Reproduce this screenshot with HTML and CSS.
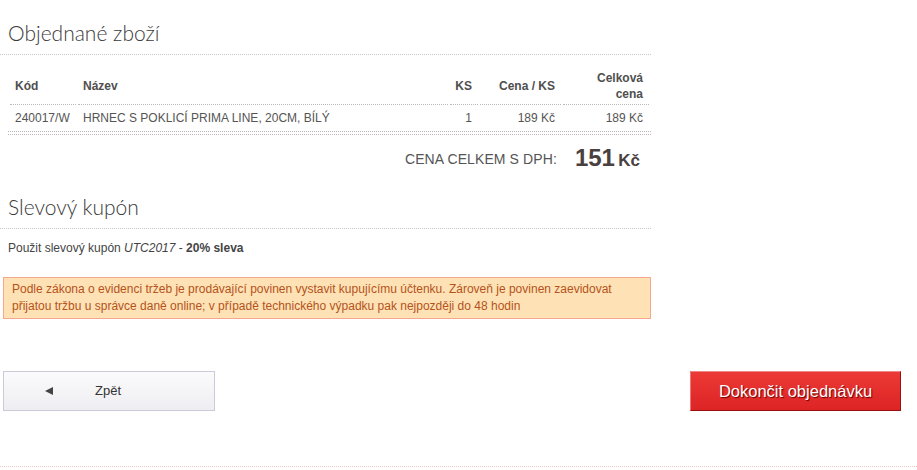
FILE: index.html
```html
<!DOCTYPE html>
<html lang="cs">
<head>
<meta charset="utf-8">
<title>Objednávka</title>
<link rel="stylesheet" href="styles.css">
</head>
<body>
<div class="main">
  <h2 class="heading">Objednané zboží</h2>
  <table class="items">
    <thead>
      <tr>
        <th class="c-code">Kód</th>
        <th class="c-name">Název</th>
        <th class="c-qty num">KS</th>
        <th class="c-price num">Cena / KS</th>
        <th class="c-total num">Celková<br>cena</th>
      </tr>
    </thead>
    <tbody>
      <tr>
        <td>240017/W</td>
        <td>HRNEC S POKLICÍ PRIMA LINE, 20CM, BÍLÝ</td>
        <td class="num">1</td>
        <td class="num">189 Kč</td>
        <td class="num">189 Kč</td>
      </tr>
    </tbody>
  </table>
  <div class="double-rule"></div>
  <div class="total">
    <span class="total-label">Cena celkem s DPH:</span>
    <span class="total-value"><span class="total-num">151</span> <span class="total-cur">Kč</span></span>
  </div>
  <h2 class="heading heading-2">Slevový kupón</h2>
  <p class="coupon">Použit slevový kupón <em>UTC2017</em> - <strong>20% sleva</strong></p>
  <div class="alert">Podle zákona o evidenci tržeb je prodávající povinen vystavit kupujícímu účtenku. Zároveň je povinen zaevidovat přijatou tržbu u správce daně online; v případě technického výpadku pak nejpozději do 48 hodin</div>
</div>
<div class="actions">
  <a class="btn-back" href="#"><span class="arrow"></span><span class="back-label">Zpět</span></a>
  <a class="btn-finish" href="#">Dokončit objednávku</a>
</div>
<div class="footer-rule"></div>
</body>
</html>
```
FILE: styles.css
```css
html, body {
  margin: 0;
  padding: 0;
  background: #fff;
}
body {
  font-family: "Liberation Sans", Arial, sans-serif;
  font-size: 12px;
  color: #555;
}
.main {
  width: 651px;
}
.heading {
  margin: 0;
  padding: 20px 0 8px 8px;
  font-family: Lato, "Liberation Sans", sans-serif;
  font-weight: 300;
  font-size: 21px;
  line-height: 26px;
  color: #3a3a3a;
  border-bottom: 1px dotted #c8c8cc;
}
.heading-2 {
  padding-top: 21px;
}
.items {
  margin: 12px 0 0 8px;
  width: 643px;
  border-collapse: separate;
  border-spacing: 2px;
  font-size: 12px;
  color: #555;
}
.items th {
  text-align: left;
  font-weight: bold;
  line-height: 16px;
  padding: 1px 6px 2px 5px;
  vertical-align: middle;
  border-bottom: 1px dotted #b8b8b8;
  color: #4f4f4f;
}
.items td {
  line-height: 16px;
  padding: 3px 6px 3px 5px;
  vertical-align: middle;
}
.items .num {
  text-align: right;
}
.c-code { width: 55px; }
.c-qty { width: 16px; }
.c-price { width: 70px; }
.c-total { width: 75px; }
.double-rule {
  height: 2px;
  border-top: 1px dotted #b8b8b8;
  border-bottom: 1px dotted #c8b8b8;
  margin-left: 8px;
}
.total {
  margin-top: 8px;
  height: 30px;
  display: flex;
  justify-content: flex-end;
  align-items: center;
  padding-right: 11px;
}
.total-label {
  text-transform: uppercase;
  font-size: 14px;
  letter-spacing: 0.1px;
  color: #555;
  margin-right: 18px;
  margin-top: 1px;
}
.total-value {
  font-weight: bold;
  color: #4a4040;
  white-space: nowrap;
}
.total-num {
  font-size: 24px;
}
.total-cur {
  font-size: 17px;
}
.coupon {
  margin: 11px 0 0 8px;
  line-height: 16px;
  font-size: 12px;
  color: #444;
}
.coupon em {
  font-style: italic;
}
.coupon strong {
  color: #444;
}
.alert {
  margin: 21px 0 0 3px;
  padding: 3px 8px 3px 8px;
  border: 1px solid #f6a88e;
  background: #fee2b6;
  color: #b5521a;
  font-size: 12px;
  line-height: 17px;
}
.actions {
  margin-top: 52px;
  display: flex;
  justify-content: space-between;
  padding: 0 16px 0 3px;
}
.btn-back {
  width: 210px;
  height: 38px;
  display: flex;
  align-items: center;
  border: 1px solid #cfc8d8;
  background: linear-gradient(#fbfbfd, #eeeef2);
  color: #333;
  text-decoration: none;
  font-size: 13px;
}
.arrow {
  width: 0;
  height: 0;
  border-top: 4.5px solid transparent;
  border-bottom: 4.5px solid transparent;
  border-right: 8px solid #444;
  margin-left: 41px;
}
.back-label {
  margin-left: 42px;
  margin-top: -2px;
}
.btn-finish {
  width: 209px;
  height: 38px;
  display: flex;
  align-items: center;
  justify-content: center;
  border: 1px solid #9a1010;
  border-top-color: #e88;
  border-left-color: #e77;
  background: linear-gradient(#ec3a36, #dc2424);
  color: #fff;
  text-decoration: none;
  font-size: 16.5px;
  text-shadow: 1px 1px 1px #6a0000;
}
.footer-rule {
  margin-top: 55px;
  border-top: 1px dotted #ecc8c8;
}
```
